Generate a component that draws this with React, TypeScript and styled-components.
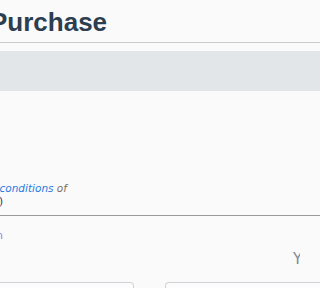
import React from 'react'
import styled, { createGlobalStyle } from 'styled-components'

const GlobalStyle = createGlobalStyle`
  html, body {
    margin: 0;
    padding: 0;
    background: #fafafa;
    overflow: hidden;
  }
  body {
    font-family: 'DejaVu Sans', Verdana, sans-serif;
  }
`

const Page = styled.div`
  width: 100%;
  height: 288px;
  overflow: hidden;
`

const Header = styled.div`
  box-sizing: border-box;
  height: 43px;
  padding-top: 7px;
  border-bottom: 1px solid #cccccc;
`

const Title = styled.h1`
  margin: 0 0 0 -10px;
  font-family: 'Liberation Sans', Arial, sans-serif;
  font-size: 26px;
  font-weight: 700;
  color: #2c3e50;
  line-height: 30px;
  white-space: nowrap;
`

const Band = styled.div`
  margin-top: 8px;
  height: 40px;
  background: #e2e6e9;
`

// a row whose text is pushed against its right end, so longer text
// spills out past the left edge of the window
interface IEnd {
  end: number
  top?: number
}

const EndRow = styled.div<IEnd>`
  width: ${(p) => p.end}px;
  margin-top: ${(p) => p.top || 0}px;
  display: flex;
  justify-content: flex-end;
  white-space: nowrap;
`

const Terms = styled.div`
  font-size: 10.5px;
  line-height: 13px;
  font-style: italic;
  color: #7d6e60;
`

const TermsLink = styled.a`
  color: #2a7ae2;
  text-decoration: none;
`

const Version = styled.div`
  font-size: 10.5px;
  line-height: 13px;
  color: #1e3a6e;
`

const Rule = styled.div`
  margin-top: 7px;
  border-top: 1px solid #9a9a9a;
`

const Visited = styled.a`
  font-size: 10.5px;
  line-height: 13px;
  color: #8a7ef0;
  text-decoration: none;
`

const TotalRow = styled.div`
  margin-top: 8px;
  width: 300px;
  padding-left: 293px;
  box-sizing: border-box;
  overflow: hidden;
  white-space: nowrap;
  font-size: 15px;
  line-height: 18px;
  color: #7e8896;
`

const Fields = styled.div`
  margin-top: 14px;
  display: grid;
  grid-template-columns: 134px 1fr;
  column-gap: 31px;
`

interface IField {
  side: 'left' | 'right'
}

const Field = styled.div<IField>`
  box-sizing: border-box;
  height: 20px;
  border: 1px solid #cfd3d8;
  border-radius: 4px;
  background: #fcfcfc;
  ${(p) =>
    p.side === 'left'
      ? 'margin-left: -10px; border-left: none; border-top-left-radius: 0;'
      : 'border-right: none; border-top-right-radius: 0;'}
`

const App = () => {
  return (
    <Page>
      <GlobalStyle />
      <Header>
        <Title>Purchase</Title>
      </Header>
      <Band />
      <EndRow end={67} top={91}>
        <Terms>
          I accept the <TermsLink href="#">terms and conditions</TermsLink> of
        </Terms>
      </EndRow>
      <EndRow end={3}>
        <Version>the store (v2.0)</Version>
      </EndRow>
      <Rule />
      <EndRow end={3} top={13}>
        <Visited href="#">Show description</Visited>
      </EndRow>
      <TotalRow>Your total</TotalRow>
      <Fields>
        <Field side="left" />
        <Field side="right" />
      </Fields>
    </Page>
  )
}

export default App
